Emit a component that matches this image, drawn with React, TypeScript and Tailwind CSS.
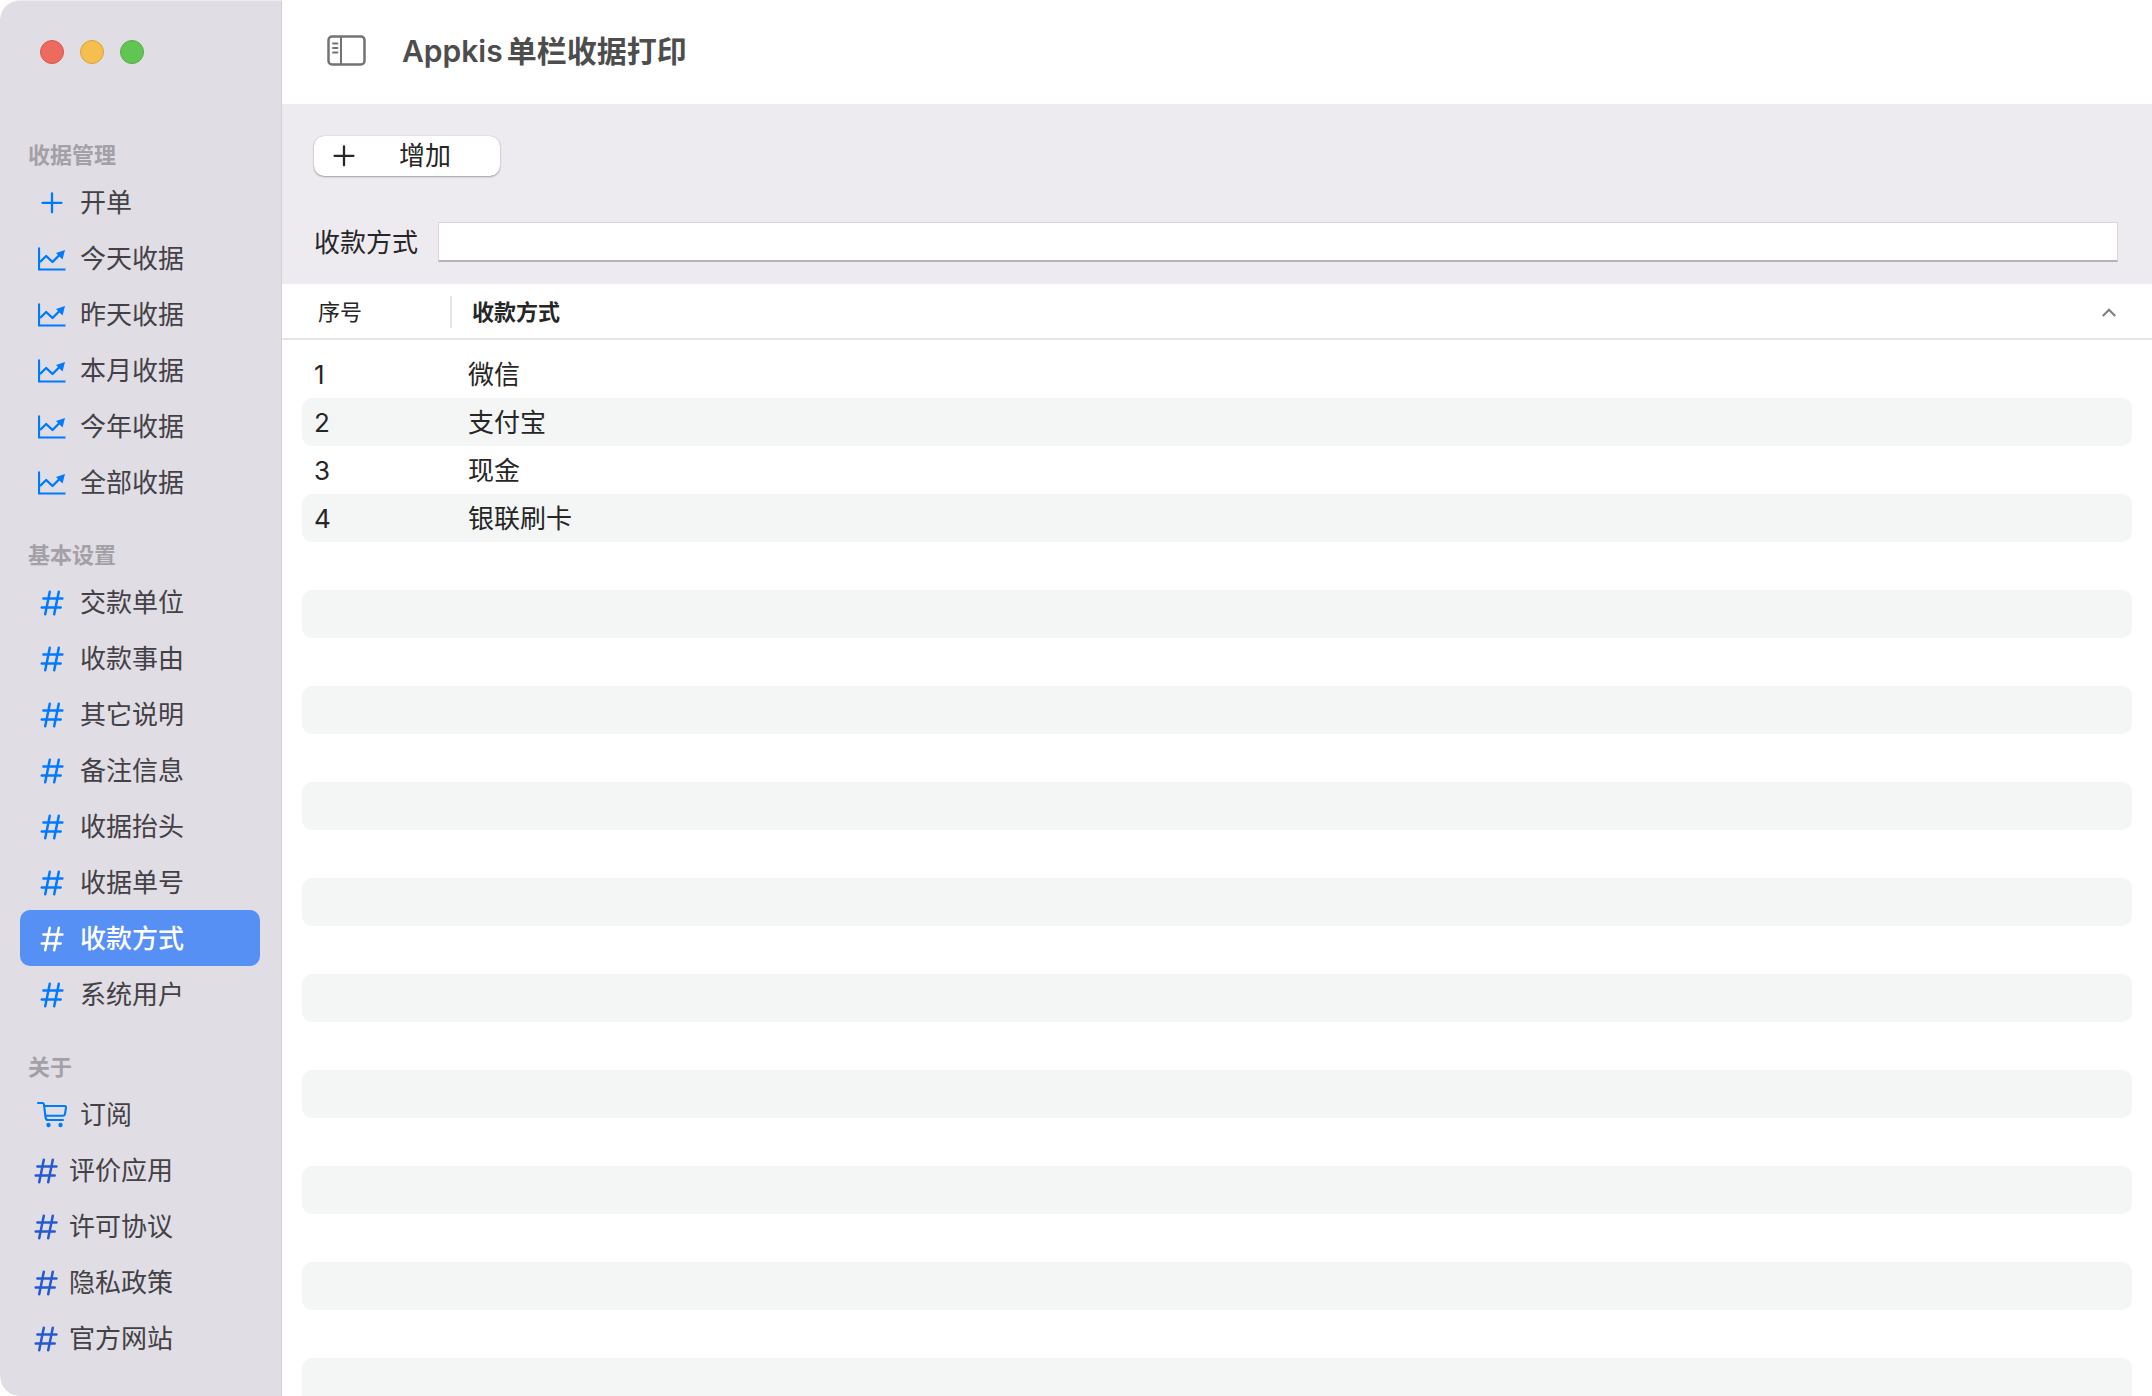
import { useState, type ReactNode } from "react";

function PlusIcon({ className }: { className: string }) {
  return (
    <svg viewBox="0 0 22 22" className={className} fill="none" stroke="currentColor" strokeWidth="2.3" strokeLinecap="round" aria-hidden="true">
      <path d="M11 1.300v19M1.500 10.800h19" />
    </svg>
  );
}

function ChartIcon() {
  return (
    <svg viewBox="0 0 28 24" className="h-6 w-7" fill="none" stroke="currentColor" aria-hidden="true">
      <path d="M1 0.5v22h26.500" strokeWidth="2.2" />
      <path d="M2 15 8.200 9l6.300 6 8.500-8.500" strokeWidth="2.4" strokeLinejoin="round" />
      <path d="M27 3 24.500 12.500 18 6Z" fill="currentColor" stroke="none" />
    </svg>
  );
}

function HashIcon() {
  return (
    <svg viewBox="0 0 24 26" className="h-[26px] w-6" fill="none" stroke="currentColor" strokeWidth="2.5" strokeLinecap="round" aria-hidden="true">
      <path d="M9.800 1.700 5.200 24.300M18.800 1.700 14.200 24.300M3.400 8.600h19M1.700 17.500h19" />
    </svg>
  );
}

function CartIcon() {
  return (
    <svg viewBox="0 0 32 28" className="h-7 w-8" fill="none" stroke="currentColor" strokeWidth="2.1" strokeLinecap="round" strokeLinejoin="round" aria-hidden="true">
      <path d="M2 2h4.500q1.200 0 1.400 1.200L9.600 16.500q.3 2.500 2.400 2.500H27" />
      <path d="M8.200 5h20.500q1.500 0 1.300 1.500L29 12.800q-.3 1.900-2.200 1.900H9.600" />
      <circle cx="12.500" cy="24" r="2.200" fill="currentColor" stroke="none" />
      <circle cx="24.500" cy="24" r="2.200" fill="currentColor" stroke="none" />
    </svg>
  );
}

function SidebarIcon() {
  return (
    <svg viewBox="0 0 40 32" className="h-8 w-10" fill="none" stroke="currentColor" aria-hidden="true">
      <rect x="1.500" y="1.500" width="36" height="28" rx="3.500" strokeWidth="2.500" />
      <path d="M14 1.500v28" strokeWidth="2" />
      <path d="M6 8.500h4.500M6 13h4.500M6 17.500h4.500" strokeWidth="1.800" strokeLinecap="round" />
    </svg>
  );
}

type Item = { label: string; icon: ReactNode };

const groups: { title: string; items: Item[] }[] = [
  {
    title: "收据管理",
    items: [
      { label: "开单", icon: <PlusIcon className="size-[22px]" /> },
      ...["今天收据", "昨天收据", "本月收据", "今年收据", "全部收据"].map((label) => ({ label, icon: <ChartIcon /> })),
    ],
  },
  {
    title: "基本设置",
    items: ["交款单位", "收款事由", "其它说明", "备注信息", "收据抬头", "收据单号", "收款方式", "系统用户"].map((label) => ({
      label,
      icon: <HashIcon />,
    })),
  },
  { title: "关于", items: [{ label: "订阅", icon: <CartIcon /> }] },
];

const links = ["评价应用", "许可协议", "隐私政策", "官方网站"];
const methods = ["微信", "支付宝", "现金", "银联刷卡"];
const ROWS = 22;

export default function App() {
  const [active, setActive] = useState("收款方式");
  const rows = Array.from({ length: ROWS }, (_, i) => methods[i] ?? "");

  return (
    <div className="flex h-screen overflow-hidden rounded-l-[20px] bg-white font-['Inter','Noto_Sans_CJK_SC',sans-serif] text-[26px] leading-8 text-[#262626]">
      <aside className="w-[282px] shrink-0 overflow-hidden rounded-l-[20px] border-t border-r border-t-[#eceaee] border-r-[#d3d0d7] bg-[#e0dde4]">
        <div className="flex h-[109px] gap-4 pt-[39px] pl-10">
          <button aria-label="关闭" className="size-6 rounded-full border border-[#d8564c] bg-[#ec6a5e]" />
          <button aria-label="最小化" className="size-6 rounded-full border border-[#d9a23c] bg-[#f4bf4f]" />
          <button aria-label="缩放" className="size-6 rounded-full border border-[#52ad43] bg-[#61c554]" />
        </div>
        <nav className="pr-[21px] pl-5">
          {groups.map((group) => (
            <section key={group.title}>
              <h2 className="flex h-16 items-center pt-[26px] pl-2 text-[22px] font-bold text-[#a3a0a7]">{group.title}</h2>
              {group.items.map(({ label, icon }) => (
                <button
                  key={label}
                  onClick={() => setActive(label)}
                  className={
                    label === active
                      ? "flex h-14 w-full items-center gap-3 rounded-[10px] bg-[#5690f5] pt-0.5 pl-4 font-medium text-white"
                      : "flex h-14 w-full items-center gap-3 rounded-[10px] pt-0.5 pl-4 text-[#434146]"
                  }
                >
                  <span className={label === active ? "flex w-8 justify-center" : "flex w-8 justify-center text-[#007aff]"}>{icon}</span>
                  {label}
                </button>
              ))}
            </section>
          ))}
          {links.map((label) => (
            <a key={label} href="#" className="flex h-14 items-center gap-[11px] pt-0.5 pl-3.5 text-[#434146]">
              <span className="text-[#2359d1]">
                <HashIcon />
              </span>
              {label}
            </a>
          ))}
        </nav>
      </aside>

      <main className="flex min-w-0 flex-1 flex-col">
        <header className="flex h-[104px] shrink-0 items-center gap-[35px] pb-0.5 pl-[45px] text-[#4d4d4d]">
          <button aria-label="切换边栏" className="text-[#737373]">
            <SidebarIcon />
          </button>
          <h1 className="text-[30px] font-semibold">
            <span className="mr-1">Appkis</span>单栏收据打印
          </h1>
        </header>

        <div className="flex h-[180px] shrink-0 flex-col gap-[46px] bg-[#edebf0] pt-8 pr-[34px] pl-8">
          <button className="flex h-10 w-[186px] items-center rounded-[10px] bg-white pl-[19px] shadow-[0_0_1px_rgba(0,0,0,0.3),0_1px_2px_rgba(0,0,0,0.3)]">
            <PlusIcon className="size-[22px]" />
            <span className="ml-11">增加</span>
          </button>
          <div className="flex items-center gap-5">
            <label htmlFor="method" className="pt-0.5">
              收款方式
            </label>
            <input
              id="method"
              type="text"
              className="h-10 min-w-0 flex-1 border border-b-2 border-[#d9d7dc] border-b-[#b5b3b8] bg-white px-2 outline-none"
            />
          </div>
        </div>

        <table className="flex min-h-0 flex-1 flex-col overflow-hidden text-left">
          <thead className="block shrink-0 border-b-2 border-[#e5e5e5] text-[22px]">
            <tr className="flex h-[54px] items-center pt-0.5">
              <th scope="col" className="w-[170px] border-r-2 border-[#e5e5e5] pl-9 font-normal">
                序号
              </th>
              <th scope="col" className="flex flex-1 items-center justify-between pr-9 pl-5 font-bold">
                收款方式
                <svg viewBox="0 0 14 9" className="h-[9px] w-3.5" fill="none" stroke="#808080" strokeWidth="2.200" aria-hidden="true">
                  <path d="M.8 8 7 1.800 13.200 8" />
                </svg>
              </th>
            </tr>
          </thead>
          <tbody className="block px-5 pt-2.5">
            {rows.map((name, i) => (
              <tr key={i} className="flex h-12 items-center rounded-[10px] pt-0.5 even:bg-[#f4f5f5]">
                <td className="w-[166px] pl-3">{name && i + 1}</td>
                <td>{name}</td>
              </tr>
            ))}
          </tbody>
        </table>
      </main>
    </div>
  );
}
